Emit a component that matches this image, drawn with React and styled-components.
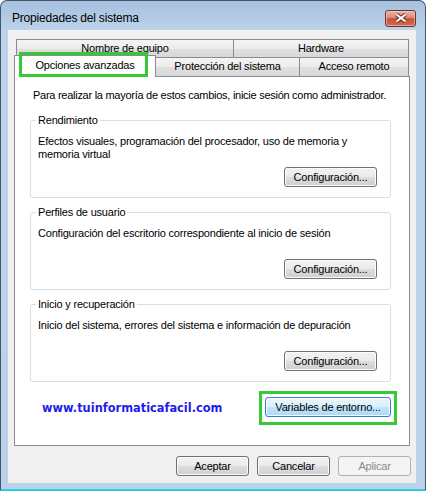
import React from 'react';
import styled, { createGlobalStyle, css } from 'styled-components';

const GlobalStyle = createGlobalStyle`
  html, body {
    margin: 0;
    padding: 0;
    background: #fff;
  }
  body {
    font-family: "Liberation Sans", Arial, sans-serif;
    font-size: 11px;
    letter-spacing: -0.2px;
    color: #000;
  }
`;

const Window = styled.div`
  box-sizing: border-box;
  width: 426px;
  height: 491px;
  display: flex;
  flex-direction: column;
  padding: 0 9px 6px 7px;
  border: 1px solid #44556b;
  border-bottom: 2px solid #2ccbe3;
  border-radius: 7px 7px 0 0;
  background: linear-gradient(180deg, #a6c0de 0px, #bdd3eb 30px, #bcd2ea 100%);
`;

const TitleBar = styled.div`
  box-sizing: border-box;
  flex: none;
  height: 29px;
  padding: 5px 0 0 4px;
  display: flex;
  align-items: center;
  justify-content: space-between;
`;

const Title = styled.span`
  font-size: 12px;
  letter-spacing: -0.2px;
  color: #000;
`;

const CloseButton = styled.button`
  box-sizing: border-box;
  width: 31px;
  height: 17px;
  padding: 0;
  display: flex;
  align-items: center;
  justify-content: center;
  border: 1px solid #6d2f2a;
  border-radius: 3px;
  background: linear-gradient(180deg, #e9b1a3 0%, #dc8e7c 42%, #c8533b 52%, #d06c52 100%);
  box-shadow: inset 0 0 0 1px rgba(255, 220, 210, 0.55);
`;

const Client = styled.div`
  flex: 1;
  display: flex;
  flex-direction: column;
  padding: 9px 5px 7px 6px;
  background: #f0f0f0;
`;

const TabRow = styled.div`
  display: flex;
  height: ${(p) => p.$h}px;
  margin: 0 2px;
`;

const Tab = styled.div`
  box-sizing: border-box;
  flex: ${(p) => (p.$w ? `0 0 ${p.$w}px` : '1')};
  border: 1px solid #898c95;
  border-bottom: none;
  background: linear-gradient(180deg, #f4f4f4 0%, #ececec 50%, #e0e0e0 51%, #d8d8d8 100%);
  text-align: center;
  line-height: 17px;
  white-space: nowrap;

  & + & {
    border-left: none;
  }

  ${(p) =>
    p.$selected &&
    css`
      position: relative;
      z-index: 1;
      height: 22px;
      margin: -2px 0 -1px -2px;
      background: #fff;
      line-height: 19px;
    `}
`;

const Callout = styled.div`
  position: absolute;
  left: 4px;
  top: -4px;
  box-sizing: border-box;
  width: 129px;
  height: 25px;
  border: 3px solid #35c935;
`;

const Panel = styled.div`
  box-sizing: border-box;
  height: 370px;
  margin-right: 1px;
  padding: 11px 18px 0 15px;
  display: flex;
  flex-direction: column;
  border: 1px solid #898c95;
  background: #fff;
`;

const Intro = styled.p`
  margin: 0 0 3px 3px;
  line-height: 15px;
  letter-spacing: -0.27px;
  white-space: nowrap;
`;

const Group = styled.fieldset`
  min-width: 0;
  margin: 7px 0 0;
  padding: 0 13px 10px 7px;
  border: 1px solid #d5dfe5;
  border-radius: 3px;
`;

const Legend = styled.legend`
  margin-left: -2px;
  padding: 0 2px;
  line-height: 14px;
`;

const GroupBody = styled.div`
  height: 60px;
  display: flex;
  flex-direction: column;
`;

const Description = styled.p`
  margin: 8px 0 0;
  line-height: 13px;
`;

const Button = styled.button`
  box-sizing: border-box;
  flex: none;
  width: ${(p) => p.$w}px;
  height: 20px;
  padding: 0;
  font: inherit;
  letter-spacing: inherit;
  color: #000;
  border: 1px solid #707070;
  border-radius: 3px;
  background: linear-gradient(180deg, #f2f2f2 0%, #ebebeb 48%, #dddddd 52%, #cfcfcf 100%);
  box-shadow: inset 0 0 0 1px #fbfbfb;

  ${(p) =>
    p.$focus &&
    css`
      border-color: #3c7fb1;
      background: linear-gradient(180deg, #eaf6fd 0%, #d9f0fc 48%, #bee6fd 52%, #a7d9f5 100%);
    `}

  &:disabled {
    color: #8a8a8a;
    border-color: #adb2b5;
    background: #f4f4f4;
    box-shadow: none;
  }
`;

const GroupButton = styled(Button)`
  margin-top: auto;
  align-self: flex-end;
`;

const BottomRow = styled.div`
  display: flex;
  align-items: center;
  justify-content: space-between;
  margin: 9px -6px 0 0;
  padding-left: 12px;
`;

const SiteLink = styled.span`
  font-family: "DejaVu Sans", Verdana, sans-serif;
  font-weight: bold;
  font-size: 11.4px;
  letter-spacing: 0;
  color: #1d1de8;
`;

const Highlight = styled.div`
  padding: 3px 3px 5px;
  border: 3px solid #35c935;
`;

const DialogButtons = styled.div`
  display: flex;
  justify-content: flex-end;
  gap: 8px;
  margin-top: 10px;
`;

const groups = [
  {
    title: 'Rendimiento',
    text: ['Efectos visuales, programación del procesador, uso de memoria y', 'memoria virtual'],
  },
  {
    title: 'Perfiles de usuario',
    text: ['Configuración del escritorio correspondiente al inicio de sesión'],
  },
  {
    title: 'Inicio y recuperación',
    text: ['Inicio del sistema, errores del sistema e información de depuración'],
  },
];

function CloseIcon() {
  return (
    <svg width="14" height="10" viewBox="0 0 14 10">
      <path d="M2.5 1.5 L11.5 8.5 M11.5 1.5 L2.5 8.5" stroke="#5e2a24" strokeWidth="4" />
      <path d="M2.5 1.5 L11.5 8.5 M11.5 1.5 L2.5 8.5" stroke="#fff" strokeWidth="2.2" />
    </svg>
  );
}

export default function App() {
  return (
    <>
      <GlobalStyle />
      <Window>
        <TitleBar>
          <Title>Propiedades del sistema</Title>
          <CloseButton aria-label="Cerrar">
            <CloseIcon />
          </CloseButton>
        </TitleBar>
        <Client>
          <TabRow $h={18}>
            <Tab $w={218}>Nombre de equipo</Tab>
            <Tab>Hardware</Tab>
          </TabRow>
          <TabRow $h={19}>
            <Tab $w={142} $selected>
              Opciones avanzadas
              <Callout />
            </Tab>
            <Tab $w={144}>Protección del sistema</Tab>
            <Tab>Acceso remoto</Tab>
          </TabRow>
          <Panel>
            <Intro>Para realizar la mayoría de estos cambios, inicie sesión como administrador.</Intro>
            {groups.map((g) => (
              <Group key={g.title}>
                <Legend>{g.title}</Legend>
                <GroupBody>
                  <Description>
                    {g.text.map((line, i) => (
                      <React.Fragment key={i}>
                        {i > 0 && <br />}
                        {line}
                      </React.Fragment>
                    ))}
                  </Description>
                  <GroupButton $w={93}>Configuración...</GroupButton>
                </GroupBody>
              </Group>
            ))}
            <BottomRow>
              <SiteLink>www.tuinformaticafacil.com</SiteLink>
              <Highlight>
                <Button $w={126} $focus>Variables de entorno...</Button>
              </Highlight>
            </BottomRow>
          </Panel>
          <DialogButtons>
            <Button $w={73}>Aceptar</Button>
            <Button $w={73}>Cancelar</Button>
            <Button $w={73} disabled>Aplicar</Button>
          </DialogButtons>
        </Client>
      </Window>
    </>
  );
}
